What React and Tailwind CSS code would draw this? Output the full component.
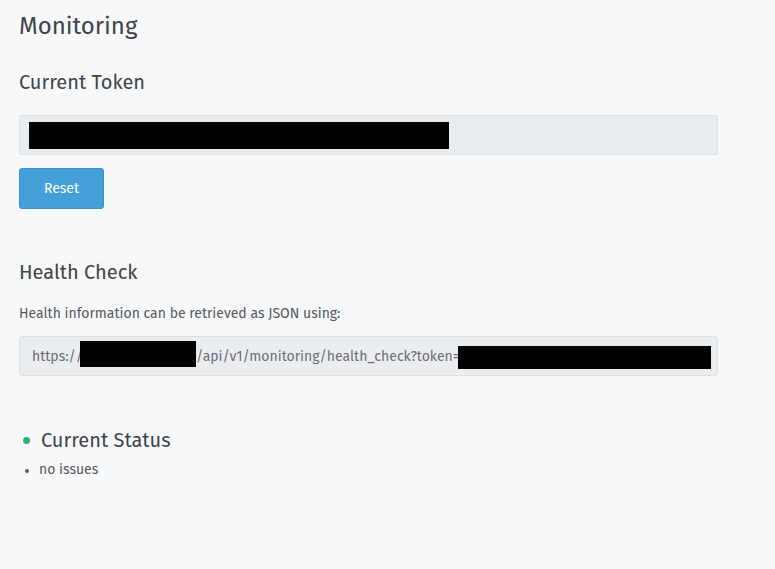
import React from "react";

export default function App() {
  return (
    <div
      className="min-h-screen bg-[#f7f8f9] text-[#3f4449] px-[19px] pt-[10px]"
      style={{ fontFamily: '"Fira Sans", Roboto, "Noto Sans", sans-serif' }}
    >
      <h1 className="text-[24px] leading-[32px]">Monitoring</h1>

      {/* token */}
      <h2 className="mt-[26px] text-[20px] leading-[28px]">Current Token</h2>
      <div className="mt-[19px] w-[699px] h-[40px] flex items-center px-[9px] bg-[#eaedf0] border border-[#dcdfe3] rounded-[3px]">
        <span className="block w-[420px] h-[27px] bg-black" />
      </div>
      <button className="mt-[13px] w-[85px] h-[41px] rounded-[3px] bg-[#45a0d9] border border-[#3b91c8] text-white text-[14px]">
        Reset
      </button>

      {/* health check */}
      <h2 className="mt-[49px] text-[20px] leading-[28px]">Health Check</h2>
      <p className="mt-[18px] text-[14px] leading-[20px] text-[#55595e]">
        Health information can be retrieved as JSON using:
      </p>
      <div className="mt-[12px] w-[699px] h-[40px] flex items-center pl-[12px] bg-[#eaedf0] border border-[#dcdfe3] rounded-[3px] text-[14px] text-[#6a6e73] whitespace-nowrap overflow-hidden">
        <span>https:/</span>
        <span>/</span>
        <span className="block w-[116px] h-[26px] bg-black -ml-[3px] -mt-[4px]" />
        <span>/api/v1/monitoring/health_check?token=</span>
        <span className="block w-[253px] h-[23px] bg-black -ml-[2px] mt-[2px]" />
      </div>

      {/* status */}
      <div className="mt-[50px] flex items-center">
        <span className="block w-[7px] h-[7px] rounded-full bg-[#38ad69] ml-[4px] mr-[11px]" />
        <h2 className="text-[20px] leading-[28px]">Current Status</h2>
      </div>
      <ul className="mt-[6px] text-[14px] leading-[20px] text-[#55595e]">
        <li className="flex items-center">
          <span className="block w-[4px] h-[4px] rounded-full bg-[#55595e] ml-[6px] mr-[10px] mt-[2px]" />
          no issues
        </li>
      </ul>
    </div>
  );
}
